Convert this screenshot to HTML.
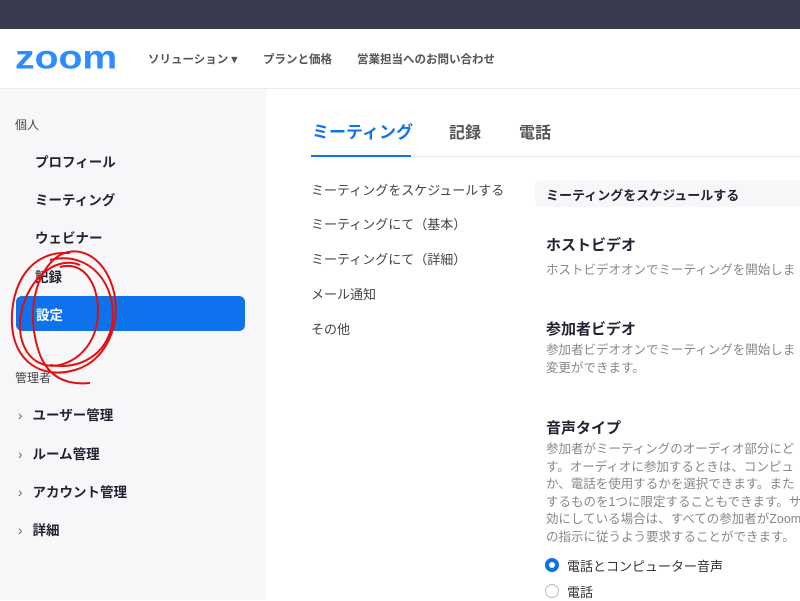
<!DOCTYPE html>
<html><head><meta charset="utf-8"><style>
*{margin:0;padding:0;box-sizing:border-box}
body{width:800px;height:600px;overflow:hidden;background:#fff;font-family:"Liberation Sans","Noto Sans CJK JP",sans-serif;position:relative;color:#232333}
.a{position:absolute;white-space:nowrap}
</style></head><body>
<div class="a" style="left:0;top:0;width:800px;height:29px;background:#383a4d"></div>
<div class="a" style="left:0;top:88px;width:800px;height:1px;background:#ececf0"></div>
<div class="a" style="left:15px;top:41px;font-size:44px;line-height:1;font-weight:bold;color:#2d8cff;transform:scale(0.89,0.76);transform-origin:0 0;font-family:'Liberation Sans',sans-serif">zoom</div>
<div class="a" style="left:148px;top:51px;font-size:11.5px;font-weight:bold;color:#555">ソリューション ▾</div>
<div class="a" style="left:263px;top:51px;font-size:11.5px;font-weight:bold;color:#555">プランと価格</div>
<div class="a" style="left:357px;top:51px;font-size:11.5px;font-weight:bold;color:#555">営業担当へのお問い合わせ</div>
<div class="a" style="left:0;top:89px;width:266px;height:511px;background:#f7f7fa"></div>
<div class="a" style="left:15px;top:116px;font-size:12px;color:#444">個人</div>
<div class="a" style="left:35px;top:151px;font-size:13.5px;font-weight:bold">プロフィール</div>
<div class="a" style="left:35px;top:189px;font-size:13.5px;font-weight:bold">ミーティング</div>
<div class="a" style="left:35px;top:227px;font-size:13.5px;font-weight:bold">ウェビナー</div>
<div class="a" style="left:35px;top:266px;font-size:13.5px;font-weight:bold">記録</div>
<div class="a" style="left:16px;top:296px;width:229px;height:35px;background:#0e72ed;border-radius:6px"></div>
<div class="a" style="left:36px;top:304px;font-size:13.5px;font-weight:bold;color:#fff">設定</div>
<div class="a" style="left:15px;top:369px;font-size:12px;color:#444">管理者</div>
<div class="a" style="left:18px;top:404px;font-size:13.5px;font-weight:bold"><span style="font-weight:normal;color:#666;margin-right:10px">›</span>ユーザー管理</div>
<div class="a" style="left:18px;top:443px;font-size:13.5px;font-weight:bold"><span style="font-weight:normal;color:#666;margin-right:10px">›</span>ルーム管理</div>
<div class="a" style="left:18px;top:481px;font-size:13.5px;font-weight:bold"><span style="font-weight:normal;color:#666;margin-right:10px">›</span>アカウント管理</div>
<div class="a" style="left:18px;top:519px;font-size:13.5px;font-weight:bold"><span style="font-weight:normal;color:#666;margin-right:10px">›</span>詳細</div>
<svg class="a" style="left:0;top:245px" width="140" height="150" viewBox="0 0 140 150"><g fill="none" stroke="#e01010" stroke-width="2"><path d="M70 8 C30 5 10 40 12 80 C14 115 40 135 75 125 C110 115 125 70 110 35 C100 12 80 0 60 10 C35 25 25 70 40 110 C50 135 70 140 90 138"/><path d="M80 20 C55 10 25 35 20 75 C18 105 35 125 60 120 C90 112 105 80 95 45 C88 25 75 18 60 22"/><path d="M50 15 C90 5 118 40 112 80 C106 110 80 125 50 120"/></g></svg>
<div class="a" style="left:312px;top:118px;font-size:17px;font-weight:bold;color:#0e72ed">ミーティング</div>
<div class="a" style="left:449px;top:119px;font-size:16px;font-weight:bold;color:#555">記録</div>
<div class="a" style="left:519px;top:119px;font-size:16px;font-weight:bold;color:#555">電話</div>
<div class="a" style="left:311px;top:156px;width:489px;height:1px;background:#ededf2"></div>
<div class="a" style="left:311px;top:155px;width:100px;height:2px;background:#0e72ed"></div>
<div class="a" style="left:311px;top:180px;font-size:13px;color:#444">ミーティングをスケジュールする</div>
<div class="a" style="left:311px;top:214px;font-size:13px;color:#444">ミーティングにて（基本）</div>
<div class="a" style="left:311px;top:249px;font-size:13px;color:#444">ミーティングにて（詳細）</div>
<div class="a" style="left:311px;top:284px;font-size:13px;color:#444">メール通知</div>
<div class="a" style="left:311px;top:319px;font-size:13px;color:#444">その他</div>
<div class="a" style="left:535px;top:180px;width:270px;height:27px;background:#f7f7fa;border-radius:6px"></div>
<div class="a" style="left:546px;top:185px;font-size:13px;font-weight:bold">ミーティングをスケジュールする</div>
<div class="a" style="left:546px;top:234px;font-size:15px;font-weight:bold">ホストビデオ</div>
<div class="a" style="left:546px;top:259px;font-size:12.5px;color:#888">ホストビデオオンでミーティングを開始しま</div>
<div class="a" style="left:546px;top:318px;font-size:15px;font-weight:bold">参加者ビデオ</div>
<div class="a" style="left:546px;top:342px;font-size:12.5px;color:#888;line-height:17.5px">参加者ビデオオンでミーティングを開始しま<br>変更ができます。</div>
<div class="a" style="left:546px;top:417px;font-size:15px;font-weight:bold">音声タイプ</div>
<div class="a" style="left:546px;top:441px;font-size:12.5px;color:#888;line-height:17.5px">参加者がミーティングのオーディオ部分にど<br>す。オーディオに参加するときは、コンピュ<br>か、電話を使用するかを選択できます。また<br>するものを1つに限定することもできます。サ<br>効にしている場合は、すべての参加者がZoom<br>の指示に従うよう要求することができます。</div>
<div class="a" style="left:545px;top:558px;width:14px;height:14px;border-radius:50%;border:4px solid #0e72ed"></div>
<div class="a" style="left:567px;top:556px;font-size:13px;color:#333">電話とコンピューター音声</div>
<div class="a" style="left:545px;top:584px;width:14px;height:14px;border-radius:50%;border:1px solid #bbb"></div>
<div class="a" style="left:567px;top:582px;font-size:13px;color:#333">電話</div>
</body></html>
